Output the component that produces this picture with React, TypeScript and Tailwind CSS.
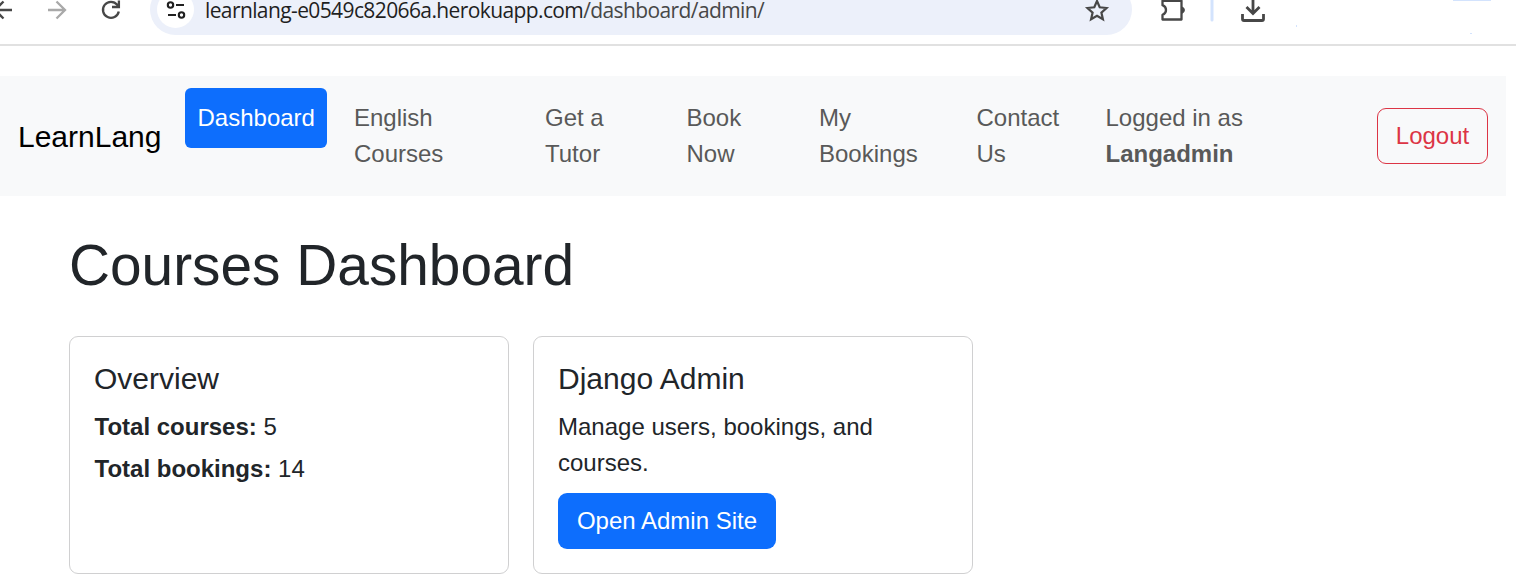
import React from "react";

const navItems = [
  { lines: ["English", "Courses"], width: "w-[191px]" },
  { lines: ["Get a", "Tutor"], width: "w-[141.5px]" },
  { lines: ["Book", "Now"], width: "w-[132.5px]" },
  { lines: ["My", "Bookings"], width: "w-[157.5px]" },
  { lines: ["Contact", "Us"], width: "w-[129px]" },
];

function Toolbar() {
  return (
    <header className="h-[46px] overflow-hidden border-b-2 border-[#e1e1e1] bg-white">
      <div className="-mt-4 flex h-[51px]">
        <svg className="h-[51px] w-[150px] shrink-0" viewBox="0 -16 150 51" fill="none" strokeWidth="2.3">
          <path d="M12 10H-6M3.5 1.5L-5 10L3.5 18.5" stroke="#474747" />
          <path d="M48 10H64.5M56.5 1.5L65 10L56.5 18.5" stroke="#a9a9a9" />
          <path d="M118.8 11.5A8 8 0 1 1 117.2 4.8L118.8 7M118.9 0.5V7H112" stroke="#474747" />
        </svg>
        <div className="flex w-[982px] shrink-0 items-center rounded-full bg-[#ecf0fa] pl-[7px]">
          <svg className="h-[37px] w-[37px] shrink-0 rounded-full bg-white" viewBox="157 -9 37 37" fill="none" stroke="#202020" strokeWidth="2.1">
            <circle cx="170.5" cy="5" r="2.7" />
            <path d="M176 5H184M168 15H176" />
            <circle cx="181.5" cy="15" r="2.7" />
          </svg>
          <p className="ml-[11px] w-[879px] whitespace-nowrap pt-px font-['Open_Sans',sans-serif] text-[21px] leading-[20px] tracking-[-0.61px] text-[#1f1f1f]">
            learnlang-e0549c82066a.herokuapp.com<span className="text-[#474747]">/dashboard/admin/</span>
          </p>
          <svg className="h-[51px] w-[48px] shrink-0" viewBox="1084 -16 48 51" fill="none" stroke="#474747" strokeWidth="2.2">
            <path d="M1097 1L1099.7 7.3L1106.5 8L1101.4 12.6L1102.9 19.2L1097 15.7L1091.1 19.2L1092.6 12.6L1087.5 8L1094.3 7.3Z" />
          </svg>
        </div>
        <svg className="h-[51px] w-[384px] shrink-0" viewBox="1132 -16 384 51" fill="none">
          <path d="M1162.5 0.8V5.2Q1166 6.5 1166 10Q1166 13.5 1162.5 14.8V19.5H1181.5V0.8Z" stroke="#474747" strokeWidth="2.3" strokeLinejoin="round" />
          <path d="M1182 7A3.2 3.2 0 0 1 1182 13.2Z" stroke="#474747" strokeWidth="1" fill="#474747" />
          <path d="M1212 -16V20" stroke="#d3e3fd" strokeWidth="3" strokeLinecap="round" />
          <path d="M1253 -8V13M1246.5 7L1253 13.5L1259.5 7M1242.5 14V19Q1242.5 20.5 1244 20.5H1262Q1263.5 20.5 1263.5 19V14" stroke="#474747" strokeWidth="2.8" />
          <path d="M1453 0H1491" stroke="#d3e3fd" strokeWidth="2" />
          <path d="M1296 25h1v2h-1zM1470 33h2v1h-2z" fill="#d3e3fd" />
        </svg>
      </div>
    </header>
  );
}

export default function App() {
  return (
    <div className="h-[587px] w-[1516px] overflow-hidden bg-white font-['Liberation_Sans',Arial,sans-serif] text-2xl leading-9 text-[#212529]">
      <Toolbar />
      <nav className="mt-[30px] flex h-[120px] w-[1506px] items-start bg-[#f8f9fa] pt-3 text-[#595959]">
        <a className="ml-[18px] mt-[26px] w-[167px] text-[30px] leading-[45px] text-black">LearnLang</a>
        <a className="mr-[27px] h-[60px] w-[142px] rounded-md bg-[#0d6efd] py-3 pl-[12.5px] text-white">Dashboard</a>
        {navItems.map((item) => (
          <a key={item.lines[0]} className={`${item.width} shrink-0 py-3`}>
            {item.lines[0]}
            <br />
            {item.lines[1]}
          </a>
        ))}
        <p className="w-[271.5px] shrink-0 py-3">
          Logged in as
          <br />
          <strong>Langadmin</strong>
        </p>
        <button className="mt-5 h-[56px] w-[111px] shrink-0 rounded-[9px] border border-[#dc3545] text-[#dc3545]">Logout</button>
      </nav>
      <main className="px-[69px] pt-9">
        <h1 className="text-[56.8px] leading-[68px]">Courses Dashboard</h1>
        <div className="mt-9 flex gap-6">
          <section className="h-[238px] w-[440px] rounded-[9px] border border-[#d0d0d1] p-6">
            <h2 className="mb-3 text-[30px] leading-9">Overview</h2>
            <p className="mb-1.5 pl-[0.5px]"><strong>Total courses:</strong> 5</p>
            <p className="pl-[0.5px]"><strong>Total bookings:</strong> 14</p>
          </section>
          <section className="h-[238px] w-[440px] rounded-[9px] border border-[#d0d0d1] p-6">
            <h2 className="mb-3 text-[30px] leading-9">Django Admin</h2>
            <p className="mb-3">Manage users, bookings, and courses.</p>
            <button className="h-14 w-[218px] rounded-[9px] bg-[#0d6efd] text-white">Open Admin Site</button>
          </section>
        </div>
      </main>
    </div>
  );
}
